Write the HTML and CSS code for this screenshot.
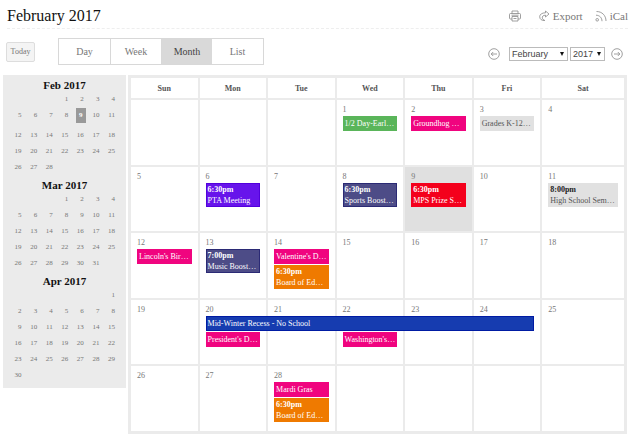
FILE: index.html
```html
<!DOCTYPE html>
<html lang="en">
<head>
  <meta charset="utf-8">
  <title>School Calendar</title>
  <link rel="stylesheet" href="styles.css">
</head>
<body>
  <header class="page-header">
    <h1>February 2017</h1>
    <nav class="actions">
      <a href="#" aria-label="Print">
        <svg width="12" height="12" viewBox="0 0 12 12"><path d="M3 3.5V1h6v2.500M3 9H1.500Q.5 9 .5 8V4.500q0-1 1-1h9q1 0 1 1V8q0 1-1 1H9M3 6.500h6v4.500H3zM4.500 8.500h3M2.500 5.200h7"/></svg>
      </a>
      <a href="#" class="export">
        <svg width="11" height="12" viewBox="0 0 11 12"><path d="M6.500 1l3.500 3-3.500 3V5.200C4 5.200 3 6.500 3.300 8.200q.4 1.600 2.500 2.300C2.500 10.800.7 9 .7 6.700.7 4.300 3 2.800 6.500 2.800z"/></svg>
        Export
      </a>
      <a href="#" class="ical">
        <svg width="12" height="12" viewBox="0 0 12 12"><path d="M1.500 1.500c5.500 0 9.500 4 9.500 9.500M1 5.200c3.500 0 6 2.500 6 6"/><circle cx="2.200" cy="9.800" r="1.300"/></svg>
        iCal
      </a>
    </nav>
  </header>

  <div class="toolbar">
    <button type="button" class="today-btn">Today</button>
    <div class="views">
      <button type="button">Day</button>
      <button type="button">Week</button>
      <button type="button" class="active">Month</button>
      <button type="button">List</button>
    </div>
    <form class="picker">
      <button type="button" class="arrow" aria-label="Previous month">
        <svg width="12" height="12" viewBox="0 0 12 12"><circle cx="6" cy="6" r="5.300"/><path d="M9 6H3.200M5.200 4l-2 2 2 2"/></svg>
      </button>
      <span class="select month-select">
        <select aria-label="Month">
          <option>January</option>
          <option selected>February</option>
          <option>March</option>
          <option>April</option>
        </select>
      </span>
      <span class="select year-select">
        <select aria-label="Year">
          <option>2016</option>
          <option selected>2017</option>
          <option>2018</option>
        </select>
      </span>
      <button type="button" class="arrow next" aria-label="Next month">
        <svg width="12" height="12" viewBox="0 0 12 12"><circle cx="6" cy="6" r="5.300"/><path d="M3 6h5.800M6.800 4l2 2-2 2"/></svg>
      </button>
    </form>
  </div>

  <main class="layout">
    <aside class="sidebar">
      <table class="mini">
        <caption>Feb 2017</caption>
        <tr><td></td><td></td><td></td><td>1</td><td>2</td><td>3</td><td>4</td></tr>
        <tr class="this-week"><td>5</td><td>6</td><td>7</td><td>8</td><td><span class="current">9</span></td><td>10</td><td>11</td></tr>
        <tr><td>12</td><td>13</td><td>14</td><td>15</td><td>16</td><td>17</td><td>18</td></tr>
        <tr><td>19</td><td>20</td><td>21</td><td>22</td><td>23</td><td>24</td><td>25</td></tr>
        <tr><td>26</td><td>27</td><td>28</td><td></td><td></td><td></td><td></td></tr>
      </table>
      <table class="mini">
        <caption>Mar 2017</caption>
        <tr><td></td><td></td><td></td><td>1</td><td>2</td><td>3</td><td>4</td></tr>
        <tr><td>5</td><td>6</td><td>7</td><td>8</td><td>9</td><td>10</td><td>11</td></tr>
        <tr><td>12</td><td>13</td><td>14</td><td>15</td><td>16</td><td>17</td><td>18</td></tr>
        <tr><td>19</td><td>20</td><td>21</td><td>22</td><td>23</td><td>24</td><td>25</td></tr>
        <tr><td>26</td><td>27</td><td>28</td><td>29</td><td>30</td><td>31</td><td></td></tr>
      </table>
      <table class="mini">
        <caption>Apr 2017</caption>
        <tr><td></td><td></td><td></td><td></td><td></td><td></td><td>1</td></tr>
        <tr><td>2</td><td>3</td><td>4</td><td>5</td><td>6</td><td>7</td><td>8</td></tr>
        <tr><td>9</td><td>10</td><td>11</td><td>12</td><td>13</td><td>14</td><td>15</td></tr>
        <tr><td>16</td><td>17</td><td>18</td><td>19</td><td>20</td><td>21</td><td>22</td></tr>
        <tr><td>23</td><td>24</td><td>25</td><td>26</td><td>27</td><td>28</td><td>29</td></tr>
        <tr><td>30</td><td></td><td></td><td></td><td></td><td></td><td></td></tr>
      </table>
    </aside>

    <div class="month-wrap">
      <table class="month">
        <thead>
          <tr><th>Sun</th><th>Mon</th><th>Tue</th><th>Wed</th><th>Thu</th><th>Fri</th><th class="last">Sat</th></tr>
        </thead>
        <tbody>
          <tr>
            <td></td>
            <td></td>
            <td></td>
            <td><div class="day">1</div><a href="#" class="event green">1/2 Day-Early Release</a></td>
            <td><div class="day">2</div><a href="#" class="event pink">Groundhog Day</a></td>
            <td><div class="day">3</div><a href="#" class="event gray">Grades K-12&mdash;Report Cards</a></td>
            <td><div class="day">4</div></td>
          </tr>
          <tr>
            <td><div class="day">5</div></td>
            <td><div class="day">6</div><a href="#" class="event timed purple"><b>6:30pm</b>PTA Meeting</a></td>
            <td><div class="day">7</div></td>
            <td><div class="day">8</div><a href="#" class="event timed navy"><b>6:30pm</b>Sports Booster Meeting</a></td>
            <td class="today"><div class="day">9</div><a href="#" class="event timed red"><b>6:30pm</b>MPS Prize Search</a></td>
            <td><div class="day">10</div></td>
            <td><div class="day">11</div><a href="#" class="event timed gray"><b>8:00pm</b>High School Semi-Formal</a></td>
          </tr>
          <tr>
            <td><div class="day">12</div><a href="#" class="event pink">Lincoln's Birthday</a></td>
            <td><div class="day">13</div><a href="#" class="event timed navy"><b>7:00pm</b>Music Booster Meeting</a></td>
            <td><div class="day">14</div><a href="#" class="event pink">Valentine's Day Party</a><a href="#" class="event timed orange"><b>6:30pm</b>Board of Education</a></td>
            <td><div class="day">15</div></td>
            <td><div class="day">16</div></td>
            <td><div class="day">17</div></td>
            <td><div class="day">18</div></td>
          </tr>
          <tr>
            <td><div class="day">19</div></td>
            <td><div class="day">20</div><a href="#" class="event blue span-5">Mid-Winter Recess - No School</a><a href="#" class="event pink">President's Day Holiday</a></td>
            <td><div class="day">21</div></td>
            <td><div class="day">22</div><a href="#" class="event pink second">Washington's Birthday</a></td>
            <td><div class="day">23</div></td>
            <td><div class="day">24</div></td>
            <td><div class="day">25</div></td>
          </tr>
          <tr>
            <td><div class="day">26</div></td>
            <td><div class="day">27</div></td>
            <td><div class="day">28</div><a href="#" class="event pink">Mardi Gras</a><a href="#" class="event timed orange"><b>6:30pm</b>Board of Education</a></td>
            <td></td>
            <td></td>
            <td></td>
            <td></td>
          </tr>
        </tbody>
      </table>
    </div>
  </main>
</body>
</html>
```
FILE: styles.css
```css
* {
  box-sizing: border-box;
}

body {
  margin: 0;
  padding: 4px 12px 0 3px;
  background: #fff;
  color: #777;
  font-family: "Liberation Serif", "Times New Roman", serif;
  font-size: 8px;
}

a {
  color: inherit;
  text-decoration: none;
}

button {
  padding: 0;
  border: none;
  background: none;
  color: inherit;
  font-family: inherit;
  cursor: pointer;
}

svg {
  display: block;
  fill: none;
  stroke: #888;
  stroke-width: 0.8;
}

/* header */
.page-header {
  display: flex;
  justify-content: space-between;
  align-items: center;
  height: 25px;
  margin-left: 4px;
  border-bottom: 1px dashed #eee;
}

h1 {
  margin: 0;
  color: #111;
  font-family: Georgia, "Liberation Serif", serif;
  font-size: 16px;
  font-weight: normal;
}

.actions {
  display: flex;
  gap: 12px;
  font-size: 11px;
}

.actions a {
  display: flex;
  align-items: center;
  gap: 3px;
}

.actions .export {
  margin-left: 6px;
}

/* toolbar */
.toolbar {
  display: flex;
  align-items: center;
  padding: 9px 5px 10px 3px;
}

.today-btn {
  width: 29px;
  height: 20px;
  border: 1px solid #ddd;
  border-radius: 2px;
  background: #f4f4f4;
  font-size: 8px;
}

.views {
  display: flex;
  margin-left: 23px;
  border: 1px solid #d8d8d8;
}

.views button {
  width: 51px;
  height: 25px;
  border-left: 1px solid #d8d8d8;
  font-size: 10px;
}

.views button:first-child {
  border-left: none;
}

.views .active {
  background: #d9d9d9;
  color: #444;
}

.views .active + button {
  border-left: none;
}

.picker {
  display: flex;
  align-items: center;
  gap: 2px;
  margin-left: auto;
  padding-top: 5px;
}

.arrow {
  margin-right: 7px;
}

.arrow.next {
  margin: 0 0 0 4px;
}

.select {
  position: relative;
}

.select::after {
  content: "";
  position: absolute;
  right: 4px;
  top: 5px;
  border: 2px solid transparent;
  border-top: 4px solid #111;
  border-bottom: none;
  pointer-events: none;
}

select {
  display: block;
  width: 100%;
  height: 14px;
  padding: 0 2px;
  border: 1px solid #bbb;
  border-radius: 0;
  background: #fff;
  color: #444;
  font-family: "Liberation Sans", Arial, sans-serif;
  font-size: 9px;
  appearance: none;
}

.month-select {
  width: 59px;
}

.year-select {
  width: 35px;
}

/* content */
.layout {
  display: flex;
  align-items: flex-start;
  gap: 2px;
  padding-right: 1px;
}

.sidebar {
  flex: 0 0 123px;
  padding: 4px 11px 1px 3px;
  background: #ebebeb;
}

.mini {
  width: 100%;
  table-layout: fixed;
  border-collapse: collapse;
  margin-bottom: 4px;
  font-size: 7px;
}

.mini caption {
  padding-left: 8px;
  color: #111;
  font-size: 11px;
  font-weight: bold;
  line-height: 12px;
}

.mini td {
  height: 16px;
  padding: 0;
  text-align: right;
}

.mini .this-week td {
  height: 20px;
  padding-bottom: 4px;
}

.current {
  display: inline-block;
  width: 10px;
  margin-right: -2px;
  background: #999;
  color: #fff;
  font-weight: bold;
  line-height: 15px;
  text-align: center;
}

.month-wrap {
  flex: 1;
  min-width: 0;
  padding: 1px;
  background: #ebebeb;
}

.month {
  width: 100%;
  height: 357px;
  table-layout: fixed;
  border-spacing: 2px;
}

.month th {
  height: 20px;
  padding: 0;
  background: #fff;
  color: #555;
  font-size: 8px;
}

.month .last {
  width: 17%;
}

.month td {
  height: 64px;
  padding: 4px 6px 0;
  background: #fff;
  vertical-align: top;
}

.month .today {
  background: #e0e0e0;
}

.day {
  line-height: 12px;
}

.event {
  display: block;
  overflow: hidden;
  margin-bottom: 1px;
  padding-left: 1px;
  border: 1px solid transparent;
  color: #fff;
  line-height: 13px;
  text-overflow: ellipsis;
  white-space: nowrap;
}

.event b {
  display: block;
}

.timed {
  padding-right: 2px;
  line-height: 11px;
}

/* runs on over the four cells to its right */
.span-5 {
  position: relative;
  z-index: 1;
  width: calc(500% + 56px);
}

/* leaves the first line free for a spanning event */
.second {
  margin-top: 16px;
}

.green {
  background: #5ab55a;
}

.pink {
  background: #f0047f;
}

.gray {
  background: #e1e1e1;
  color: #555;
}

.gray b {
  color: #222;
}

.purple {
  border-color: #5200dc;
  background: #6714eb;
}

.navy {
  border-color: #2b2a75;
  background: #4d4c87;
}

.red {
  background: #f4001c;
}

.orange {
  background: #ef7a00;
}

.blue {
  border-color: #001ba3;
  background: #163cb0;
}
```
